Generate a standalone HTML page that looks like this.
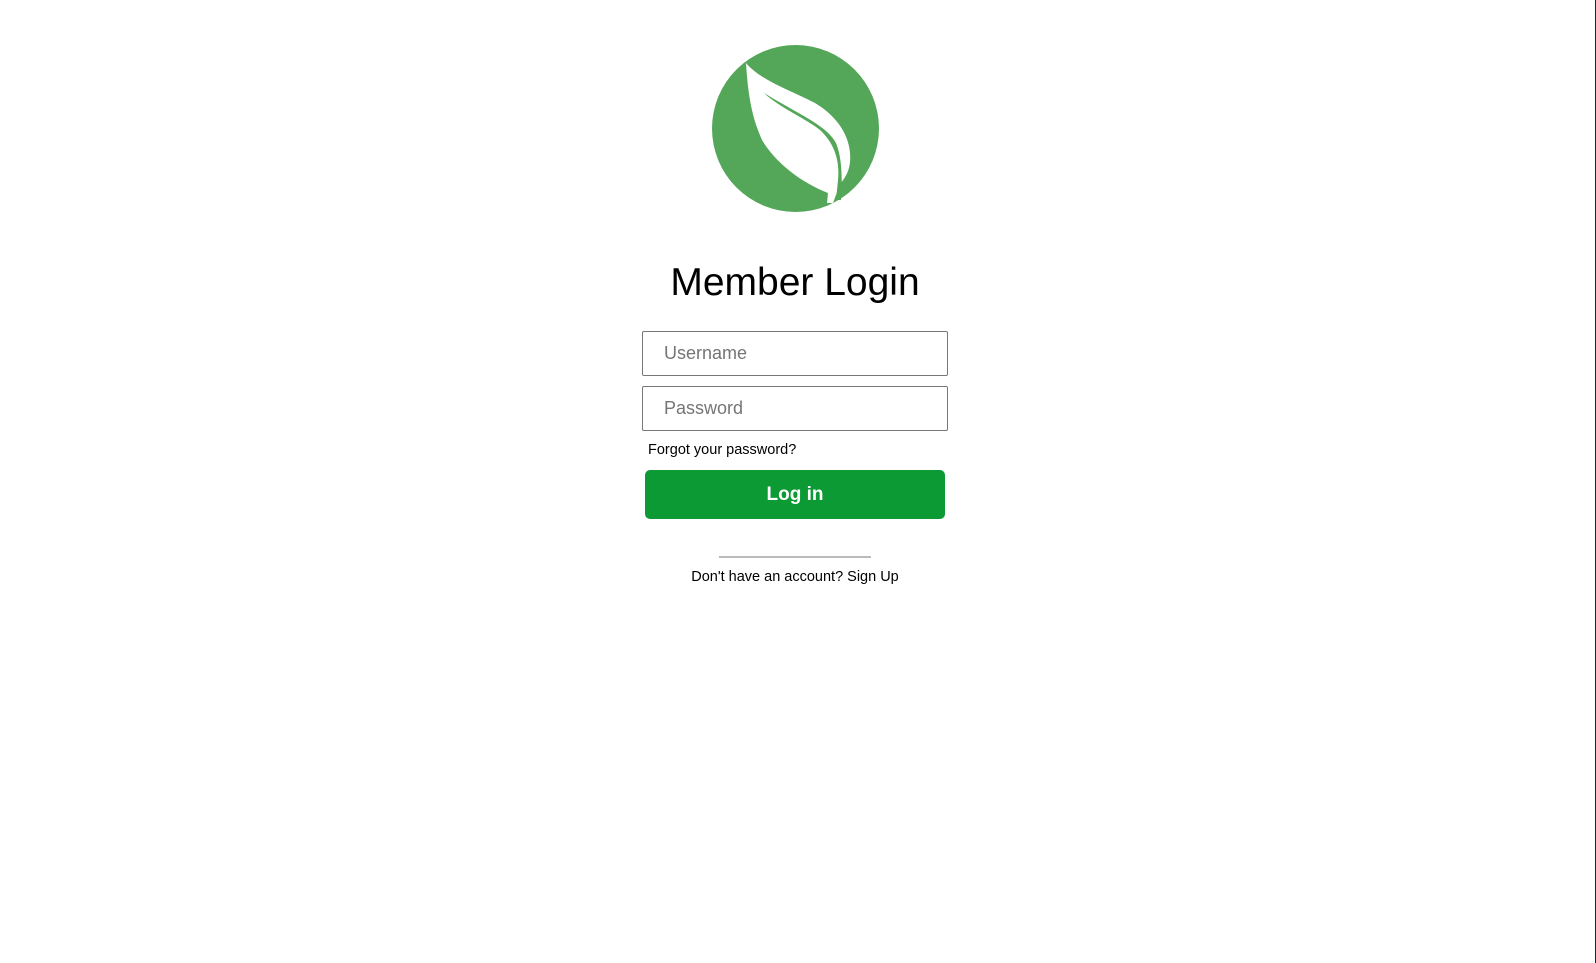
<!DOCTYPE html>
<html><head><meta charset="utf-8"><style>
html,body{margin:0;padding:0;background:#fff;width:1596px;height:963px;overflow:hidden;position:relative;font-family:"Liberation Sans",sans-serif}
.edge{position:absolute;right:0;top:0;width:1px;height:963px;background:#1a2238}
.logo{position:absolute;left:712px;top:45px}
h1{position:absolute;left:0;width:1590px;top:255px;margin:0;text-align:center;font-weight:normal;font-size:39px;color:#000;line-height:56px}
.in{position:absolute;left:642px;width:283px;height:43px;border:1px solid #777;border-radius:2px;font-size:18px;color:#757575;line-height:43px;padding-left:21px;box-sizing:content-box}
.forgot{position:absolute;left:648px;top:442px;font-size:14.5px;color:#000}
.btn{position:absolute;left:645px;top:470px;width:300px;height:49px;background:#0c9a35;border-radius:5px;color:#fff;font-weight:bold;font-size:19px;text-align:center;line-height:50px}
.hr{position:absolute;left:719px;top:556px;width:152px;height:2px;background:#bbb}
.su{position:absolute;left:0;width:1590px;text-align:center;top:569px;font-size:14.5px;color:#000}
</style></head><body>
<div class="edge"></div>
<svg class="logo" width="168" height="168" viewBox="712 45 168 168">
<circle cx="795.5" cy="128.5" r="83.5" fill="#54a758"/>
<path d="M746 63 C760 80 790 90 815 103 C840 118 852 140 850 162 C849 172 845 178 840 184 L833 203 L827 203 L828 193 C800 182 775 162 762 140 C752 118 748 95 746 63 Z" fill="#fff"/>
<path d="M764 93 C780 108 805 118 820 130 C834 143 840 160 838 180 L836 200 L841 200 C842 185 843 160 836 143 C826 125 800 115 764 93 Z" fill="#54a758"/>
</svg>
<h1>Member Login</h1>
<div class="in" style="top:331px">Username</div>
<div class="in" style="top:386px">Password</div>
<div class="forgot">Forgot your password?</div>
<div class="btn">Log in</div>
<div class="hr"></div>
<div class="su">Don't have an account? Sign Up</div>
</body></html>
